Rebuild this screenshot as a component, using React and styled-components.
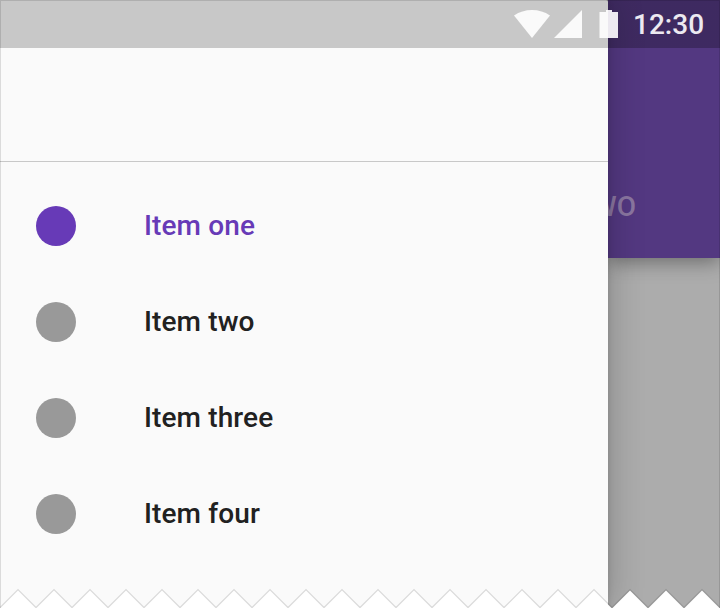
import React from 'react';
import styled, { createGlobalStyle } from 'styled-components';

const GlobalStyle = createGlobalStyle`
  * { box-sizing: border-box; }
  body { margin: 0; background: #fff; font-family: Roboto, sans-serif; }
`;

const Screen = styled.div`
  position: relative;
  width: 720px;
  height: 608px;
  overflow: hidden;
  display: grid;
  grid-template-columns: 608px 112px;
  background: #acacac;
`;

const Drawer = styled.nav`
  position: relative;
  z-index: 2;
  background: #fafafa;
  border-top-right-radius: 2px;
  box-shadow: 0 0 36px rgba(0, 0, 0, 0.24), 0 0 6px rgba(0, 0, 0, 0.12);
`;

const DrawerHeader = styled.header`
  height: 162px;
  border-bottom: 1px solid #c8c8c8;
`;

const List = styled.ul`
  margin: 0;
  padding: 16px 0 0;
  list-style: none;
`;

const Item = styled.li`
  display: flex;
  align-items: center;
  gap: 68px;
  height: 96px;
  padding-left: 36px;
  font-size: 28px;
  font-weight: 500;
  line-height: 32px;
  letter-spacing: 0.12px;
  color: ${({ $active }) => ($active ? '#673ab7' : '#212121')};
`;

const Dot = styled.span`
  width: 40px;
  height: 40px;
  border-radius: 50%;
  background: ${({ $active }) => ($active ? '#673ab7' : '#999')};
`;

const Content = styled.main`
  min-width: 0;
`;

const AppBar = styled.div`
  display: flex;
  align-items: flex-end;
  justify-content: flex-end;
  height: 258px;
  padding: 0 84px 35px 0;
  background: #533881;
  color: #8a76a0;
  font-size: 28px;
  font-weight: 500;
  line-height: 32px;
  white-space: nowrap;
  box-shadow: 0 4px 18px rgba(0, 0, 0, 0.38);
`;

const StatusBar = styled.div`
  position: absolute;
  z-index: 3;
  inset: 0 0 auto 0;
  display: flex;
  justify-content: flex-end;
  height: 48px;
  padding-right: 16px;
  background: linear-gradient(to right, rgba(0, 0, 0, 0.2) 608px, rgba(0, 0, 0, 0.25) 608px);
`;

const StatusIcons = styled.svg`
  width: 120px;
  height: 48px;
  flex: none;
`;

const Clock = styled.time`
  width: 71px;
  padding-top: 9px;
  color: #ece9f0;
  font-size: 28px;
  font-weight: 500;
  line-height: 32px;
  white-space: nowrap;
`;

const Frame = styled.div`
  position: absolute;
  z-index: 4;
  inset: 0;
  border: 1px solid rgba(0, 0, 0, 0.12);
  border-bottom: 0;
`;

const TornEdge = styled.svg`
  position: absolute;
  z-index: 5;
  left: 0;
  bottom: 0;
`;

const items = ['Item one', 'Item two', 'Item three', 'Item four'];
const zigzag = Array.from({ length: 41 }, (_, i) => `${i * 18},${i % 2 ? 20.5 : 38.5}`).join(' ');

export default function App() {
  return (
    <>
      <GlobalStyle />
      <Screen>
        <Drawer>
          <DrawerHeader />
          <List>
            {items.map((label, i) => (
              <Item key={label} $active={i === 0}>
                <Dot $active={i === 0} />
                {label}
              </Item>
            ))}
          </List>
        </Drawer>
        <Content>
          <AppBar>ITEM TWO</AppBar>
        </Content>
        <StatusBar>
          <StatusIcons viewBox="513 0 120 48">
            <path d="M514 15.5Q522 10 532 10T550 15.5L532 38Z" fill="#fafafa" />
            <path d="M582 10V38H554Z" fill="#fafafa" />
            <path d="M599.5 12H606V10H608V38H599.5Z" fill="#fafafa" />
            <path d="M608 10H612V12H618V38H608Z" fill="#ece9f0" />
          </StatusIcons>
          <Clock>12:30</Clock>
        </StatusBar>
        <Frame />
        <TornEdge width="720" height="38" viewBox="0 0 720 38">
          <polyline points={zigzag} fill="none" stroke="rgba(0,0,0,0.12)" strokeWidth="2.6" />
          <polygon points={`${zigzag} 720,40 0,40`} fill="#fff" />
        </TornEdge>
      </Screen>
    </>
  );
}
